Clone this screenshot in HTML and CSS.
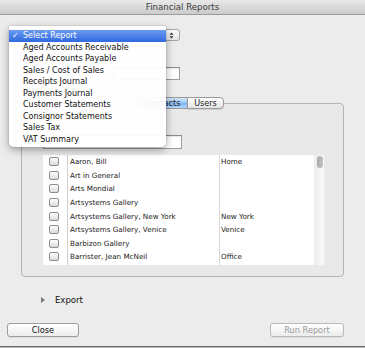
FILE: index.html
```html
<!DOCTYPE html>
<html>
<head>
<meta charset="utf-8">
<link rel="stylesheet" href="styles.css">
</head>
<body>
<div class="window">
  <div class="titlebar">Financial Reports</div>
  <div class="content">
    <div class="row-popup">
      <div class="popup">
        <span class="popup-label"></span>
        <span class="popup-arrows">
          <svg width="5" height="7" viewBox="0 0 5 7"><path d="M2.5 0.5 L4.5 2.8 L0.5 2.8 Z M0.5 4.2 L4.5 4.2 L2.5 6.5 Z" fill="#333"/></svg>
        </span>
      </div>
    </div>
    <div class="row-field">
      <div class="field short"></div>
    </div>
    <div class="group">
      <div class="tabs">
        <div class="tab selected">Contacts</div>
        <div class="tab last">Users</div>
      </div>
      <div class="box">
        <div class="field search"></div>
        <div class="list">
          <div class="grid">
            <div class="cb"><span class="check"></span></div><div class="name">Aaron, Bill</div><div class="loc">Home</div>
            <div class="cb"><span class="check"></span></div><div class="name">Art in General</div><div class="loc"></div>
            <div class="cb"><span class="check"></span></div><div class="name">Arts Mondial</div><div class="loc"></div>
            <div class="cb"><span class="check"></span></div><div class="name">Artsystems Gallery</div><div class="loc"></div>
            <div class="cb"><span class="check"></span></div><div class="name">Artsystems Gallery, New York</div><div class="loc">New York</div>
            <div class="cb"><span class="check"></span></div><div class="name">Artsystems Gallery, Venice</div><div class="loc">Venice</div>
            <div class="cb"><span class="check"></span></div><div class="name">Barbizon Gallery</div><div class="loc"></div>
            <div class="cb"><span class="check"></span></div><div class="name">Barrister, Jean McNeil</div><div class="loc">Office</div>
            <div class="cb"><span class="check"></span></div><div class="name"></div><div class="loc"></div>
          </div>
          <div class="scroll"><div class="thumb"></div></div>
        </div>
      </div>
    </div>
    <div class="export">
      <svg class="tri" width="4" height="6" viewBox="0 0 4 6"><path d="M0 0 L4 3 L0 6 Z" fill="#7a7a7a"/></svg>
      <span>Export</span>
    </div>
    <div class="buttons">
      <div class="btn close">Close</div>
      <div class="btn run">Run Report</div>
    </div>
  </div>
  <div class="bottomline"></div>

  <div class="menu">
    <div class="item hl"><span class="tick">✓</span>Select Report</div>
    <div class="item">Aged Accounts Receivable</div>
    <div class="item">Aged Accounts Payable</div>
    <div class="item">Sales / Cost of Sales</div>
    <div class="item">Receipts Journal</div>
    <div class="item">Payments Journal</div>
    <div class="item">Customer Statements</div>
    <div class="item">Consignor Statements</div>
    <div class="item">Sales Tax</div>
    <div class="item">VAT Summary</div>
  </div>
</div>
</body>
</html>
```

FILE: styles.css
```css
* { box-sizing: border-box; }
html, body { margin: 0; padding: 0; }
body {
  width: 365px;
  height: 348px;
  overflow: hidden;
  background: #ececec;
  font-family: "DejaVu Sans", sans-serif;
  color: #1e1e1e;
}
.window {
  position: relative;
  width: 365px;
  height: 348px;
  background: #ececec;
}
.titlebar {
  height: 15px;
  line-height: 14px;
  text-align: center;
  font-size: 8.6px;
  color: #3a3a3a;
  background: linear-gradient(#e9e9e9, #cbcbcb);
  border-bottom: 1px solid #9c9c9c;
}
.content {
  display: flex;
  flex-direction: column;
  height: 331px;
}
.row-popup {
  margin-top: 14px;
  padding-left: 9px;
  height: 12px;
}
.popup {
  width: 171px;
  height: 12px;
  border: 1px solid #a3a3a3;
  border-radius: 3px;
  background: linear-gradient(#fdfdfd, #e6e6e6);
  display: flex;
  align-items: center;
  justify-content: space-between;
  font-size: 8px;
  padding-left: 8px;
}
.popup-arrows {
  width: 15px;
  height: 10px;
  display: flex;
  align-items: center;
  justify-content: center;
}
.row-field {
  margin-top: 26px;
  padding-left: 113px;
  height: 13px;
}
.field {
  background: #fff;
  border: 1px solid #9e9e9e;
  border-top-color: #8a8a8a;
  box-shadow: inset 0 1px 1px rgba(0,0,0,0.08);
}
.field.short { width: 67px; height: 13px; }
.group {
  margin-top: 17px;
  padding-left: 21px;
}
.tabs {
  display: flex;
  height: 12px;
  margin-left: 116px;
  position: relative;
  z-index: 1;
}
.tab {
  height: 12px;
  font-size: 8.1px;
  line-height: 10px;
  border: 1px solid #9a9a9a;
  background: linear-gradient(#ffffff, #e4e4e4);
  color: #222;
  text-align: center;
}
.tab.selected {
  width: 50px;
  border-radius: 4px 0 0 4px;
  border-right: none;
  background: linear-gradient(#d4e6fb 0%, #9cc5f4 50%, #7fb2ef 55%, #b7d8fb 100%);
}
.tab.last {
  width: 37px;
  border-radius: 0 4px 4px 0;
  box-shadow: 0 1px 1px rgba(0,0,0,0.12);
}
.box {
  margin-top: -6px;
  width: 323px;
  height: 174px;
  border: 1px solid #b4b4b4;
  border-radius: 4px;
  background: #e9e9e9;
  padding-left: 21px;
  padding-top: 31px;
}
.field.search { width: 139px; height: 14px; }
.list {
  margin-top: 6px;
  display: flex;
  width: 281px;
  height: 110px;
  background: #fff;
  overflow: hidden;
}
.grid {
  display: grid;
  grid-template-columns: 25px 152px 94px;
  grid-auto-rows: 13.6px;
  font-size: 7.2px;
  color: #222;
  align-content: start;
}
.grid > div { display: flex; align-items: center; }
.cb { padding-left: 6px; border-right: 1px solid #cfcfcf; }
.name { padding-left: 2px; border-right: 1px solid #d8d8d8; }
.loc { padding-left: 1px; }
.check {
  width: 10px;
  height: 9px;
  border: 1px solid #8e8e8e;
  border-radius: 2px;
  background: linear-gradient(#ffffff, #dadada);
}
.scroll {
  width: 10px;
  height: 110px;
  background: linear-gradient(90deg, #ececec, #f9f9f9);
  padding: 1px 0 0 3px;
}
.thumb {
  width: 6px;
  height: 12px;
  border-radius: 3px;
  background: linear-gradient(90deg, #a9a9a9, #c4c4c4);
}
.export {
  margin-top: 18px;
  height: 10px;
  padding-left: 41px;
  display: flex;
  align-items: center;
  font-size: 8.5px;
  color: #111;
}
.export .tri { margin-right: 10px; }
.buttons {
  margin-top: 18px;
  display: flex;
  justify-content: space-between;
  padding-left: 7px;
  padding-right: 21px;
}
.btn {
  height: 14px;
  border: 1px solid #9d9d9d;
  border-radius: 3px;
  background: linear-gradient(#ffffff, #ececec);
  font-size: 8.2px;
  line-height: 12px;
  text-align: center;
  box-shadow: 0 1px 0 rgba(0,0,0,0.06);
}
.btn.close { width: 72px; color: #111; }
.btn.run { width: 74px; color: #9a9a9a; border-color: #b9b9b9; }
.bottomline {
  position: absolute;
  left: 0;
  right: 0;
  top: 346px;
  height: 2px;
  border-top: 1px solid #6a6a6a;
  background: #b5b5b5;
}
.menu {
  position: absolute;
  left: 9px;
  top: 26px;
  width: 157px;
  height: 121px;
  padding-top: 4px;
  background: rgba(255,255,255,0.95);
  border-radius: 0 0 5px 5px;
  box-shadow: 0 3px 9px rgba(0,0,0,0.35), 0 0 0 0.5px rgba(0,0,0,0.12);
  font-size: 8px;
  z-index: 5;
}
.item {
  height: 11.5px;
  line-height: 11.5px;
  padding-left: 14px;
  color: #111;
  position: relative;
  white-space: nowrap;
}
.item.hl {
  background: linear-gradient(#6a9af0, #2f69e0);
  color: #fff;
}
.tick {
  position: absolute;
  left: 3px;
  top: 0;
}
```
